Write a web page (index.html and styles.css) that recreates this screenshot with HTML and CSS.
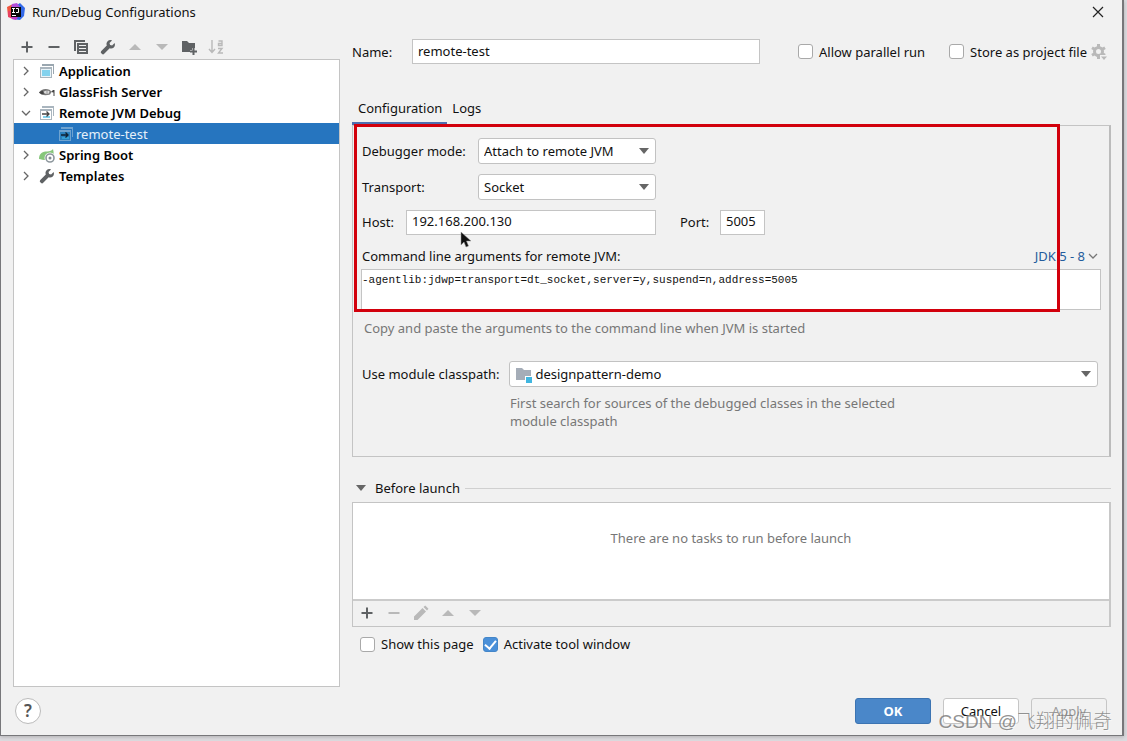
FILE: index.html
```html
<!DOCTYPE html>
<html lang="en">
<head>
<meta charset="utf-8">
<title>Run/Debug Configurations</title>
<link rel="stylesheet" href="styles.css">
</head>
<body>
<svg class="sprites" aria-hidden="true">
  <symbol id="plus" viewBox="0 0 16 16"><path d="M8 2.500v11M2.500 8h11" stroke="currentColor" stroke-width="2" fill="none"/></symbol>
  <symbol id="minus" viewBox="0 0 16 16"><path d="M2.500 8h11" stroke="currentColor" stroke-width="2" fill="none"/></symbol>
  <symbol id="up" viewBox="0 0 16 16"><path d="M2 11l6-6 6 6z" fill="currentColor"/></symbol>
  <symbol id="down" viewBox="0 0 16 16"><path d="M2 5l6 6 6-6z" fill="currentColor"/></symbol>
  <symbol id="caret" viewBox="0 0 10 6"><path d="M0 0h10L5 6z" fill="currentColor"/></symbol>
  <symbol id="wrench" viewBox="0 0 16 16"><path d="M14.6 4.1l-2.5 2.4-2-.6-.6-2L12 1.4C10.400.8 8.700 1.100 7.600 2.300 6.500 3.400 6.200 5 6.800 6.400L1.300 11.900a1.600 1.600 0 0 0 0 2.300l.6.6a1.600 1.600 0 0 0 2.300 0l5.500-5.500c1.400.6 3 .3 4.100-.8 1.200-1.200 1.500-2.900.8-4.400z" fill="currentColor"/></symbol>
  <symbol id="chev" viewBox="0 0 10 10"><path d="M3 1l4 4-4 4" stroke="currentColor" stroke-width="1.300" fill="none"/></symbol>
  <symbol id="chevdown" viewBox="0 0 10 10"><path d="M1 3l4 4 4-4" stroke="currentColor" stroke-width="1.300" fill="none"/></symbol>
  <symbol id="remote" viewBox="0 0 16 16">
    <path d="M3 1h12v10h-1V3H3z" fill="var(--frame)"/><path d="M1 4h12v11H1z" fill="var(--frame)"/><path d="M2 6h10v8H2z" fill="var(--pane)"/><path d="M4 13h7v-2H4z" fill="var(--glass)"/>
    <path d="M3 9h7M7.500 6.500L10 9l-2.500 2.500" stroke="var(--arrow)" stroke-width="1.300" fill="none"/>
  </symbol>
</svg>

<main class="dialog">
  <header class="titlebar">
    <svg class="logo" viewBox="0 0 18 18" aria-hidden="true">
      <path d="M0 4l6-3 4 3-4 8-5 1z" fill="#f0563f"/><path d="M1 8l4 0 1 8-5-2z" fill="#e8405f"/><path d="M10 2l3-2 5 5-1 8-4 4-8-1z" fill="#3369e8"/><path d="M5 1l5-1 3 4-9 1z" fill="#b14fd8"/><path d="M4 14h7l-2 3-4-1z" fill="#c53bc8"/>
      <path d="M4 4h10v10H4z" fill="#080808"/><path d="M5 5.500h3M6.500 5.500v4M5 9.500h3M9 5.500h2.500v4H9M5 12.500h4" stroke="#fff" fill="none"/>
    </svg>
    <h1>Run/Debug Configurations</h1>
    <button class="icon-btn close" aria-label="Close"><svg viewBox="0 0 12 12"><path d="M1 1l10 10M11 1L1 11" stroke="#222" stroke-width="1.200" fill="none"/></svg></button>
  </header>

  <div class="columns">
    <section class="sidebar">
      <div class="toolbar">
        <button class="icon-btn" aria-label="Add"><svg><use href="#plus"/></svg></button>
        <button class="icon-btn" aria-label="Remove"><svg><use href="#minus"/></svg></button>
        <button class="icon-btn" aria-label="Copy"><svg viewBox="0 0 16 16"><path d="M2 12V2H12" stroke="currentColor" stroke-width="2" fill="none"/><path d="M4 4h11v11H4z" fill="currentColor"/><path d="M6 6.500h7M6 9.500h7M6 12.500h7" stroke="#f1f1f1" stroke-width="1"/></svg></button>
        <button class="icon-btn" aria-label="Edit templates"><svg><use href="#wrench"/></svg></button>
        <button class="icon-btn" aria-label="Move up" disabled><svg><use href="#up"/></svg></button>
        <button class="icon-btn" aria-label="Move down" disabled><svg><use href="#down"/></svg></button>
        <button class="icon-btn" aria-label="New folder"><svg viewBox="0 0 16 16"><path d="M1 2h5l2 2h6v5h-3v2H9v2H1z" fill="currentColor"/><path d="M12.500 9v7M9 12.500h7" stroke="currentColor" stroke-width="2"/></svg></button>
        <button class="icon-btn" aria-label="Sort alphabetically" disabled><svg viewBox="0 0 16 16"><path d="M4 1v12M1 10l3 3.500L7 10M10.500 2H14v4.500h-3.500v-2H14M10 9.500h4L10.500 14H15" stroke="currentColor" stroke-width="1.400" fill="none"/></svg></button>
      </div>
      <ul class="tree">
        <li class="node"><svg class="chev"><use href="#chev"/></svg><svg viewBox="0 0 16 16"><path d="M3 1h12v10h-1V3H3z" fill="#9aa7b0"/><path d="M1 4h12v11H1z" fill="#a9b5be"/><path d="M2 6h10v8H2z" fill="#e8f3f8"/><path d="M3 7h8v6H3z" fill="#82d2ee"/></svg><span>Application</span></li>
        <li class="node"><svg class="chev"><use href="#chev"/></svg><svg viewBox="0 0 16 16"><path d="M0 8.500c2-3 6-4.500 11-2.500l1.500 2-1.500 2.500c-5 1.500-9 .5-11-2z" fill="#777"/><path d="M4.500 8c1-1.500 4-1.500 6-1l-.5 2.500c-2 .8-4.500.5-5.500-1.500z" fill="#ddd"/><path d="M0 8.500l3.500-2L5 9.500l-2 1z" fill="#444"/><path d="M8 6.500v4" stroke="#999"/><path d="M12 8l2-2h1.500v6h-1V8.500z" fill="#444"/></svg><span>GlassFish Server</span></li>
        <li class="node"><svg class="chev"><use href="#chevdown"/></svg><svg class="remote"><use href="#remote"/></svg><span>Remote JVM Debug</span></li>
        <li class="node child selected"><svg class="remote"><use href="#remote"/></svg><span>remote-test</span></li>
        <li class="node"><svg class="chev"><use href="#chev"/></svg><svg viewBox="0 0 16 16"><path d="M0 12C0 6 4 4.500 8 4.500c3 0 5-1 6-2.500 1 4 1 7-1 9-3 3-9 2-13 1z" fill="#86c67b"/><circle cx="11" cy="11" r="5.500" fill="#fff"/><circle cx="11" cy="11" r="4" fill="none" stroke="#8d979d" stroke-width="1.600"/><circle cx="11" cy="11" r="1.500" fill="#7f8b91"/></svg><span>Spring Boot</span></li>
        <li class="node"><svg class="chev"><use href="#chev"/></svg><svg><use href="#wrench"/></svg><span>Templates</span></li>
      </ul>
    </section>

    <section class="editor">
      <div class="name-row">
        <label for="name">Name:</label>
        <input class="field" id="name" type="text" value="remote-test">
        <div class="options">
          <label class="check"><input type="checkbox"><span>Allow parallel run</span></label>
          <label class="check"><input type="checkbox"><span>Store as project file</span></label>
          <button class="icon-btn gear" aria-label="Storage options" disabled><svg viewBox="0 0 16 16"><circle cx="7.500" cy="7.500" r="4" fill="none" stroke="currentColor" stroke-width="3"/><path d="M7.500 0v3M7.500 12v3M1 3.700l2.600 1.500M11.400 9.800L14 11.300M1 11.300l2.600-1.500M11.400 5.200L14 3.700" stroke="currentColor" stroke-width="3"/><path d="M9 11h7v2l-3.500 3L9 13z" fill="#f1f1f1"/><path d="M10 12.500h6L13 16z" fill="currentColor"/></svg></button>
        </div>
      </div>

      <nav class="tabs" role="tablist">
        <button role="tab" aria-selected="true">Configuration</button>
        <button role="tab" aria-selected="false">Logs</button>
      </nav>

      <div class="panel">
        <div class="mark"></div>
        <div class="row"><label class="wide" for="mode">Debugger mode:</label><div class="combo"><select id="mode"><option>Attach to remote JVM</option></select><svg class="caret"><use href="#caret"/></svg></div></div>
        <div class="row"><label class="wide" for="transport">Transport:</label><div class="combo"><select id="transport"><option>Socket</option></select><svg class="caret"><use href="#caret"/></svg></div></div>
        <div class="row host-row"><label class="host-label" for="host">Host:</label><input class="field host" id="host" type="text" value="192.168.200.130"><label class="port-label" for="port">Port:</label><input class="field port" id="port" type="text" value="5005"></div>
        <div class="args-head"><label for="args">Command line arguments for remote JVM:</label><button class="jdk">JDK 5 - 8<svg><use href="#chevdown"/></svg></button></div>
        <textarea id="args" spellcheck="false">-agentlib:jdwp=transport=dt_socket,server=y,suspend=n,address=5005</textarea>
        <p class="hint">Copy and paste the arguments to the command line when JVM is started</p>
        <div class="module-row">
          <label for="module">Use module classpath:</label>
          <div class="combo module"><svg class="folder" viewBox="0 0 16 16"><path d="M0 1h6l2 2h7v6H9v4H0z" fill="#a5adb8"/><path d="M10 10h6v6h-6z" fill="#40b6e0"/></svg><select id="module"><option>designpattern-demo</option></select><svg class="caret"><use href="#caret"/></svg></div>
        </div>
        <p class="module-hint">First search for sources of the debugged classes in the selected module classpath</p>
        <svg class="cursor" viewBox="0 0 12 18" aria-hidden="true"><path d="M1 1v13l3-3 2 5 2.500-1-2-5H11z" fill="#111" stroke="#999" stroke-width=".5"/></svg>
      </div>

      <h2 class="launch-head"><svg><use href="#caret"/></svg><span>Before launch</span></h2>
      <div class="launch">
        <p class="empty">There are no tasks to run before launch</p>
        <div class="toolbar launch-tools">
          <button class="icon-btn" aria-label="Add task"><svg><use href="#plus"/></svg></button>
          <button class="icon-btn" aria-label="Remove task" disabled><svg><use href="#minus"/></svg></button>
          <button class="icon-btn" aria-label="Edit task" disabled><svg viewBox="0 0 16 16"><path d="M1 15v-3.500L9.500 3 13 6.500 4.500 15zM10.500 2l1.700-1.500 3.300 3.300L14 5.500z" fill="currentColor"/></svg></button>
          <button class="icon-btn" aria-label="Move task up" disabled><svg><use href="#up"/></svg></button>
          <button class="icon-btn" aria-label="Move task down" disabled><svg><use href="#down"/></svg></button>
        </div>
      </div>
      <div class="launch-options">
        <label class="check"><input type="checkbox"><span>Show this page</span></label>
        <label class="check"><input type="checkbox" checked><span>Activate tool window</span></label>
      </div>
    </section>
  </div>

  <footer class="footer">
    <button class="help" aria-label="Help">?</button>
    <button class="btn primary">OK</button>
    <button class="btn">Cancel</button>
    <button class="btn" disabled>Apply</button>
  </footer>
  <div class="watermark">CSDN @飞翔的佩奇</div>
</main>
</body>
</html>
```

FILE: styles.css
```css
* { box-sizing: border-box; }

body {
  margin: 0;
  min-height: 100vh;
  display: flex;
  padding: 0 3px 5px 0;
  background: #dddce0;
  color: #111;
  font: 13px/18px "Noto Sans", "Noto Sans CJK SC", sans-serif;
}

button, input, select, textarea { font: inherit; color: inherit; margin: 0; }
button { border: 0; padding: 0; background: none; }
h1, h2, p, ul { margin: 0; padding: 0; font-size: inherit; font-weight: normal; }
svg { display: block; flex: none; width: 16px; height: 16px; }
.sprites { position: absolute; width: 0; height: 0; }

.dialog {
  position: relative;
  flex: 1;
  display: flex;
  flex-direction: column;
  background: #f1f1f1;
  border: solid #77777a;
  border-width: 0 2px 1px 1px;
  box-shadow: 0 1px 4px #8888;
}

.titlebar { display: flex; align-items: center; gap: 7px; height: 24px; padding: 0 18px 0 6px; }
.logo { width: 18px; height: 18px; }
.close { margin-left: auto; }
.close svg { width: 12px; height: 12px; }

.columns { flex: 1; display: flex; gap: 12px; padding: 0 11px 0 12px; }
.sidebar { width: 327px; display: flex; flex-direction: column; padding-top: 11px; }
.toolbar { display: flex; align-items: center; gap: 11px; height: 24px; padding: 0 6px; color: #5f6264; }
.icon-btn { display: grid; place-items: center; color: inherit; }
.icon-btn:disabled { color: #b9b9b9; }

.tree { flex: 1; list-style: none; background: #fff; border: 1px solid #c4c4c4; }
.node { display: flex; align-items: center; gap: 4px; height: 21px; padding-left: 7px; font-weight: 600; color: #000; }
.node > svg:not(.chev) { color: #5f6264; }
.node .chev { width: 10px; height: 10px; margin-right: 4px; color: #666; }
.remote { --frame: #a9b5be; --pane: #fff; --glass: #82d2ee; --arrow: #444; }
.child { padding-left: 44px; gap: 2px; font-weight: normal; }
.selected { background: #2675bf; color: #e5f0fa; }
.selected .remote { --frame: #6fa3d0; --pane: #2a80bd; --glass: #36a0d4; --arrow: #123; }

.editor { flex: 1; min-width: 0; display: flex; flex-direction: column; padding-top: 15px; }
.name-row { display: flex; align-items: center; height: 25px; }
.name-row > label { width: 60px; }
.field { height: 25px; border: 1px solid #c4c4c4; background: #fff; padding: 0 5px 2px; min-width: 0; }
#name { flex: 1; }
.options { display: flex; align-items: center; gap: 24px; margin-left: 38px; padding-right: 4px; }
.gear { margin-left: -20px; }
.check { display: flex; align-items: center; gap: 6px; }
.check input { appearance: none; width: 15px; height: 15px; border: 1px solid #a9a9a9; border-radius: 3px; background: #fff; display: grid; place-items: center; }
.check input:checked { background: #4a90d9; border-color: #4486c8; }
.check input:checked::after { content: ""; width: 5px; height: 9px; margin-bottom: 2px; border: solid #fff; border-width: 0 2px 2px 0; rotate: 40deg; }

.tabs { display: flex; margin-top: 32px; height: 29px; }
.tabs button { padding: 0 5px 3px; border-bottom: 3px solid transparent; }
.tabs button:first-child { padding-left: 6px; }
.tabs [aria-selected="true"] { border-color: #4f6fb0; }

.panel { position: relative; border: 1px solid #c4c4c4; border-right: 2px solid #bcbcbc; height: 332px; padding: 12px 8px 0 8px; }
.mark { position: absolute; left: 1px; top: -2px; right: 49px; height: 188px; border: 3px solid #d2000c; z-index: 2; pointer-events: none; }
.row { display: flex; align-items: center; height: 26px; margin: 0 1px 10px; }
.row label { padding-bottom: 1px; }
.wide { width: 116px; }
.combo { position: relative; width: 178px; height: 26px; }
.combo select { appearance: none; width: 100%; height: 100%; border: 1px solid #c2c2c2; border-radius: 3px; background: #fff; padding: 0 24px 0 5px; }
.caret { position: absolute; right: 7px; top: 10px; width: 10px; height: 6px; color: #666; pointer-events: none; }
.host-row { height: 24px; }
.host-label { width: 44px; }
.host { width: 250px; }
.port-label { width: 40px; margin-left: 24px; }
.port { width: 45px; }
.args-head { display: flex; justify-content: space-between; height: 25px; padding: 3px 3px 0 1px; }
.jdk { display: flex; align-items: center; gap: 3px; height: 18px; color: #245c9c; }
.jdk svg { width: 10px; height: 10px; color: #777; }
#args { display: block; width: 100%; height: 41px; resize: none; border: 1px solid #c4c4c4; padding: 2px 0; background: #fff; font: 11px/16px "Liberation Mono", monospace; }
.hint { margin: 9px 0 0 3px; color: #777; }
.module-row { display: flex; align-items: center; gap: 10px; margin: 24px 3px 0 1px; }
.module { flex: 1; }
.combo.module select { padding-left: 25px; }
.folder { position: absolute; left: 7px; top: 6px; }
.module-hint { margin: 7px 0 0 149px; width: 400px; color: #777; }
.cursor { position: absolute; left: 107px; top: 105px; width: 12px; height: 18px; }

.launch-head { display: flex; align-items: center; gap: 9px; margin-top: 22px; padding-left: 4px; }
.launch-head svg { width: 10px; height: 6px; color: #666; }
.launch-head::after { content: ""; flex: 1; height: 1px; margin-left: -4px; background: #d0d0d0; }
.launch { margin-top: 5px; border: 1px solid #c4c4c4; border-right: 2px solid #c8c8c8; }
.empty { height: 96px; padding-top: 26px; background: #fff; text-align: center; color: #777; }
.launch-tools { height: 27px; padding: 0 6px 2px; border-top: 2px solid #cbcbcb; }
.launch-options { display: flex; gap: 9px; padding: 8px 8px 0; }

.footer { display: flex; align-items: center; gap: 12px; padding: 11px 15px 11px 14px; }
.help { width: 26px; height: 26px; margin-right: auto; border: 1px solid #bbb; border-radius: 50%; background: #fff; font-size: 17px; font-weight: 600; color: #555; }
.btn { width: 76px; height: 26px; border: 1px solid #c6c6c6; border-radius: 3px; background: #fff; }
.btn:disabled { background: #f1f1f1; color: #999; }
.primary { background: #4a87c9; border-color: #3c74b2; color: #fff; font-weight: 700; }
.watermark { position: absolute; right: 10px; bottom: 0; font: 19px/26px "Liberation Sans", "Noto Sans CJK SC", sans-serif; font-weight: 300; color: #777c; text-shadow: 1px 1px #fff8; pointer-events: none; }
```
